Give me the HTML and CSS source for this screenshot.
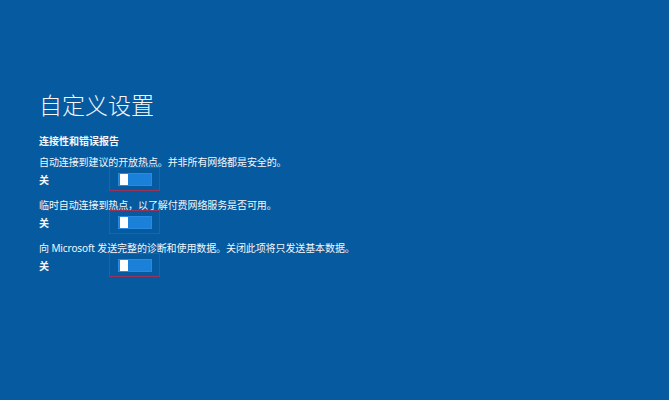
FILE: index.html
```html
<!DOCTYPE html>
<html lang="zh-CN">
<head>
  <meta charset="UTF-8">
  <title>自定义设置</title>
  <link rel="stylesheet" href="styles.css">
</head>
<body>

  <div class="page">
    <h1 class="page-title">自定义设置</h1>
    <h2 class="section-title">连接性和错误报告</h2>

    <div class="setting">
      <p class="setting__text">自动连接到建议的开放热点。并非所有网络都是安全的。</p>
      <div class="setting__row">
        <span class="setting__state">关</span>
        <span class="switch"><span class="switch__track"><span class="switch__thumb"></span></span></span>
      </div>
    </div>

    <div class="setting">
      <p class="setting__text">临时自动连接到热点，以了解付费网络服务是否可用。</p>
      <div class="setting__row">
        <span class="setting__state">关</span>
        <span class="switch"><span class="switch__track"><span class="switch__thumb"></span></span></span>
      </div>
    </div>

    <div class="setting">
      <p class="setting__text">向 Microsoft 发送完整的诊断和使用数据。关闭此项将只发送基本数据。</p>
      <div class="setting__row">
        <span class="setting__state">关</span>
        <span class="switch"><span class="switch__track"><span class="switch__thumb"></span></span></span>
      </div>
    </div>
  </div>

</body>
</html>
```

FILE: styles.css
```css
html, body {
  height: 100%;
}

body {
  margin: 0;
  background: #065a9f;
  color: #f4f7fb;
  font-family: "Noto Sans", "Noto Sans CJK SC", sans-serif;
}

.page {
  padding: 92px 0 0 39px;
}

.page-title {
  margin: 0;
  font-size: 23px;
  line-height: 26px;
  font-weight: 300;
}

.section-title {
  margin: 16px 0 7px;
  font-size: 10px;
  line-height: 14px;
  font-weight: bold;
}

.setting {
  margin-bottom: 7px;
}

.setting__text {
  margin: 0;
  font-size: 10px;
  line-height: 14px;
  letter-spacing: -0.1px;
}

.setting__row {
  display: flex;
  align-items: center;
  height: 24px;
  margin-top: -2px;
}

.setting__state {
  width: 70px;
  font-size: 10px;
  font-weight: 600;
}

/* toggle switch, off position */
.switch {
  display: flex;
  align-items: center;
  box-sizing: border-box;
  width: 51px;
  height: 24px;
  padding-left: 8px;
  border: 1px solid #9a3358;
}

.switch__track {
  display: flex;
  box-sizing: border-box;
  width: 34px;
  height: 13px;
  padding-left: 1px;
  background: #1b80d8;
  border: 1px solid #2a8ae0;
}

.switch__thumb {
  width: 8px;
  background: #fff;
}
```
